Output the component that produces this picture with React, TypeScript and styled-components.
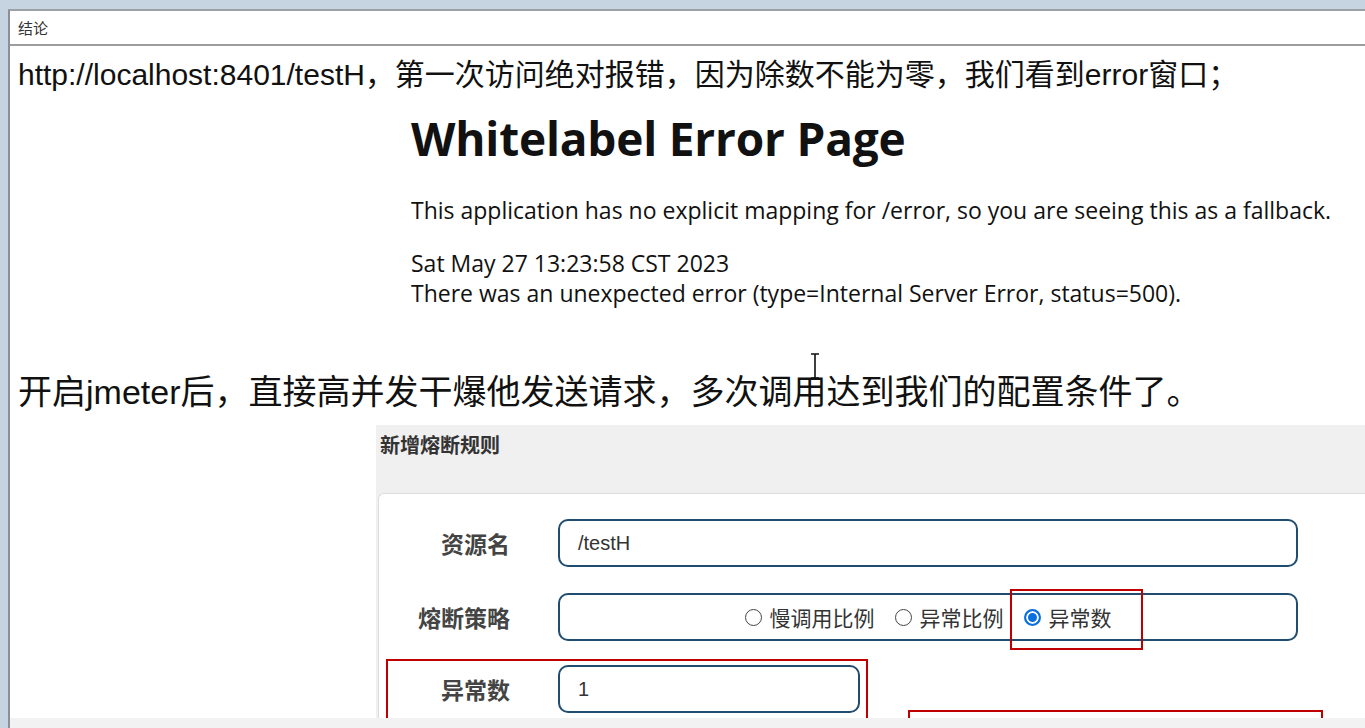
import styled, { createGlobalStyle } from "styled-components";

const GlobalStyle = createGlobalStyle`
	html, body {
		margin: 0;
		padding: 0;
		background: #c6d3e0;
	}
	* {
		box-sizing: border-box;
	}
`;

const cjk = `"Liberation Sans", "Noto Sans CJK SC", sans-serif`;

const Screen = styled.div`
	height: 728px;
	overflow: hidden;
	padding: 9px 0 0 8px;
`;

const Window = styled.div`
	height: 100%;
	display: flex;
	flex-direction: column;
	background: #fff;
	border-top: 2px solid #9aa0a6;
	border-left: 2px solid #8c9096;
`;

const TitleBar = styled.div`
	height: 35px;
	flex-shrink: 0;
	display: flex;
	align-items: center;
	padding-left: 8px;
	border-bottom: 2px solid #9c9c9c;
	font-family: "Noto Sans CJK SC", sans-serif;
	font-size: 15px;
	color: #333;
`;

const Content = styled.div`
	position: relative;
	flex: 1;
	overflow: hidden;
	padding-left: 8px;
	display: flex;
	flex-direction: column;
	align-items: flex-start;
`;

const Footer = styled.div`
	height: 10px;
	flex-shrink: 0;
	background: #f2f2f2;
`;

const Note = styled.p<{ $size: number; $top: number }>`
	margin: ${({ $top }) => $top}px 0 0;
	font-family: ${cjk};
	font-size: ${({ $size }) => $size}px;
	line-height: ${({ $size }) => $size + 8}px;
	color: #111;
	white-space: nowrap;
`;

const ErrorPage = styled.div`
	margin: 16px 0 0 393px;
	font-family: "Open Sans", "Noto Sans", sans-serif;
	color: #111;
`;

const ErrorTitle = styled.h1`
	margin: 0;
	font-size: 46px;
	line-height: 56px;
	font-weight: 700;
	letter-spacing: -0.2px;
`;

const ErrorText = styled.p<{ $top: number }>`
	margin: ${({ $top }) => $top}px 0 0;
	font-size: 23px;
	line-height: 30px;
	white-space: nowrap;
`;

const Cursor = styled.svg`
	position: absolute;
	left: 799px;
	top: 307px;
`;

const Panel = styled.div`
	margin: 12px 0 0 358px;
	align-self: stretch;
	margin-right: -8px;
	background: #f0f0f0;
	padding-left: 2px;
`;

const PanelHeader = styled.div`
	height: 68px;
	padding: 8px 0 0 2px;
	font-family: "Noto Sans CJK SC", sans-serif;
	font-weight: 700;
	font-size: 20px;
	line-height: 24px;
	color: #333;
`;

const Card = styled.div`
	position: relative;
	background: #fff;
	border: 1px solid #dcdcdc;
	border-right: none;
	border-radius: 6px 0 0 0;
	padding-top: 25px;
	height: 400px;
`;

const Row = styled.div<{ $labelWidth: number }>`
	display: grid;
	grid-template-columns: ${({ $labelWidth }) => $labelWidth}px auto;
	column-gap: 48px;
	align-items: center;
	margin-bottom: 26px;
`;

const Label = styled.label`
	text-align: right;
	font-family: "Noto Sans CJK SC", sans-serif;
	font-weight: 700;
	font-size: 23px;
	color: #444;
`;

const Field = styled.div<{ $width: number }>`
	position: relative;
	width: ${({ $width }) => $width}px;
	height: 48px;
	border: 2px solid #204c70;
	border-radius: 10px;
	display: flex;
	align-items: center;
	padding-left: 18px;
	font-family: ${cjk};
	font-size: 20px;
	color: #333;
`;

const RadioGroup = styled(Field)`
	justify-content: center;
	padding-left: 0;
	gap: 20px;
	font-size: 21px;
`;

const RadioItem = styled.span`
	display: flex;
	align-items: center;
	gap: 8px;
	color: #333;
`;

const RadioDot = styled.span<{ $checked?: boolean }>`
	width: 17px;
	height: 17px;
	border-radius: 50%;
	border: ${({ $checked }) => ($checked ? "2px solid #0b6fe0" : "1px solid #444")};
	background: ${({ $checked }) => ($checked ? "#0b6fe0" : "#fff")};
	box-shadow: ${({ $checked }) => ($checked ? "inset 0 0 0 2px #fff" : "none")};
`;

const Highlight = styled.div`
	margin: -8px 0 0 7px;
	width: 482px;
	border: 2px solid #c00000;
	padding-top: 4px;
`;

const Mark = styled.div<{ $left: number; $top: number; $w: number; $h: number }>`
	position: absolute;
	left: ${({ $left }) => $left}px;
	top: ${({ $top }) => $top}px;
	width: ${({ $w }) => $w}px;
	height: ${({ $h }) => $h}px;
	border: 2px solid #c00000;
`;

export default function App() {
	return (
		<Screen>
			<GlobalStyle />
			<Window>
				<TitleBar>结论</TitleBar>
				<Content>
					<Note $size={30} $top={10}>
						http://localhost:8401/testH，第一次访问绝对报错，因为除数不能为零，我们看到error窗口；
					</Note>
					<ErrorPage>
						<ErrorTitle>Whitelabel Error Page</ErrorTitle>
						<ErrorText $top={29}>
							This application has no explicit mapping for /error, so you are seeing this as a fallback.
						</ErrorText>
						<ErrorText $top={23}>Sat May 27 13:23:58 CST 2023</ErrorText>
						<ErrorText $top={0}>
							There was an unexpected error (type=Internal Server Error, status=500).
						</ErrorText>
					</ErrorPage>
					<Cursor width="12" height="26" viewBox="0 0 12 26">
						<path d="M2 1h8M6 1v24M2 25h8" stroke="#111" strokeWidth="1.6" fill="none" />
					</Cursor>
					<Note $size={34} $top={63}>
						开启jmeter后，直接高并发干爆他发送请求，多次调用达到我们的配置条件了。
					</Note>
					<Panel>
						<PanelHeader>新增熔断规则</PanelHeader>
						<Card>
							<Row $labelWidth={131}>
								<Label>资源名</Label>
								<Field $width={740}>/testH</Field>
							</Row>
							<Row $labelWidth={131}>
								<Label>熔断策略</Label>
								<RadioGroup $width={740}>
									<RadioItem>
										<RadioDot />
										慢调用比例
									</RadioItem>
									<RadioItem>
										<RadioDot />
										异常比例
									</RadioItem>
									<RadioItem>
										<RadioDot $checked />
										异常数
									</RadioItem>
									<Mark $left={450} $top={-6} $w={133} $h={61} />
								</RadioGroup>
							</Row>
							<Highlight>
								<Row $labelWidth={122}>
									<Label>异常数</Label>
									<Field $width={302}>1</Field>
								</Row>
							</Highlight>
							<Mark $left={529} $top={216} $w={415} $h={80} />
						</Card>
					</Panel>
				</Content>
				<Footer />
			</Window>
		</Screen>
	);
}
